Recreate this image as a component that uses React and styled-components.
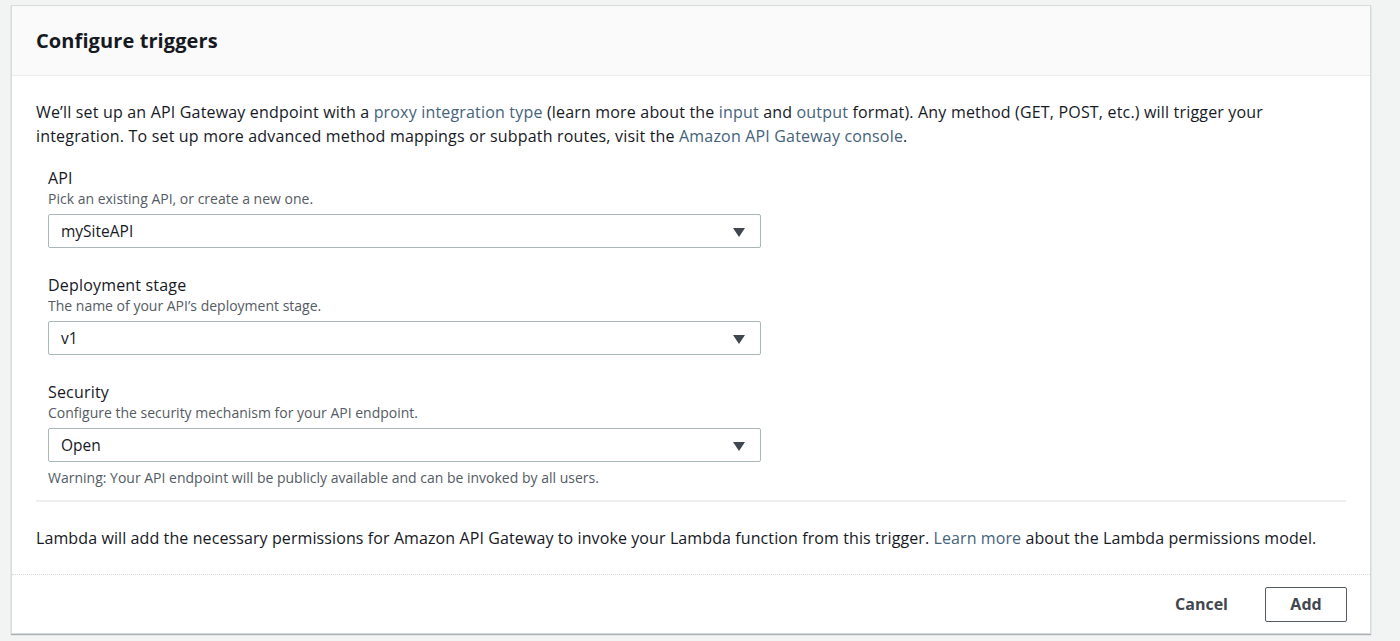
import React from 'react'
import styled, { createGlobalStyle } from 'styled-components'

const GlobalStyle = createGlobalStyle`
  body {
    margin: 0;
    background: #f2f3f3;
    font-family: "Open Sans", "Liberation Sans", Arial, sans-serif;
    color: #16191f;
  }
`

const Page = styled.div`
  padding: 5px 29px 8px 11px;
`

const Card = styled.section`
  background: #fff;
  border: 1px solid #d5dbdb;
  box-shadow: 0 1px 1px rgba(0, 28, 36, 0.3);
`

const Header = styled.header`
  height: 69px;
  display: flex;
  align-items: center;
  padding: 0 24px;
  background: #fafafa;
  border-bottom: 1px solid #eaeded;
`

const Title = styled.h2`
  margin: 0;
  font-size: 20px;
  font-weight: 700;
  letter-spacing: 0.1px;
  color: #16191f;
`

const Body = styled.div`
  padding: 24px 24px 0;
`

const Text = styled.p`
  margin: 0;
  font-size: 16px;
  line-height: 24px;
  letter-spacing: 0.18px;
  color: #16191f;
`

const Link = styled.a`
  color: #44637b;
  text-decoration: none;
`

const Form = styled.div`
  padding: 20px 12px 0;
  display: flex;
  flex-direction: column;
  gap: 27px;
`

const Field = styled.div`
  display: flex;
  flex-direction: column;
`

const Label = styled.label`
  font-size: 16px;
  line-height: 20px;
  letter-spacing: 0.18px;
`

const Desc = styled.span`
  font-size: 14px;
  line-height: 22px;
  color: #545b64;
  margin-bottom: 4px;
`

const SelectBox = styled.div`
  width: 713px;
  height: 34px;
  box-sizing: border-box;
  border: 1px solid #aab7b8;
  border-radius: 2px;
  display: flex;
  align-items: center;
  justify-content: space-between;
  padding: 0 15px 0 12px;
  font-size: 15.5px;
  color: #16191f;
`

const Caret = styled.span`
  width: 0;
  height: 0;
  border-left: 6px solid transparent;
  border-right: 6px solid transparent;
  border-top: 9px solid #414750;
  margin-top: 2px;
`

const Warning = styled.span`
  font-size: 14px;
  line-height: 16px;
  color: #545b64;
  margin-top: 8px;
`

const Divider = styled.hr`
  margin: 14px 0 0;
  border: 0;
  border-top: 2px solid #eef0f0;
`

const Permissions = styled(Text)`
  padding: 24px 0 24px;
  letter-spacing: 0.1px;
`

const Footer = styled.footer`
  border-top: 1px dotted #d5dbdb;
  height: 58px;
  display: flex;
  align-items: center;
  justify-content: flex-end;
  gap: 37px;
  padding: 0 23px;
`

const Button = styled.button`
  font-family: inherit;
  font-size: 16px;
  font-weight: 700;
  color: #414750;
  background: ${p => (p.outline ? '#fff' : 'transparent')};
  border: ${p => (p.outline ? '1px solid #545b64' : '0')};
  border-radius: 2px;
  height: 35px;
  padding: ${p => (p.outline ? '0 22px' : '0')};
  min-width: ${p => (p.outline ? '82px' : '0')};
  cursor: pointer;
`

const fields = [
  { label: 'API', desc: 'Pick an existing API, or create a new one.', value: 'mySiteAPI' },
  { label: 'Deployment stage', desc: 'The name of your API’s deployment stage.', value: 'v1' },
  { label: 'Security', desc: 'Configure the security mechanism for your API endpoint.', value: 'Open' },
]

const App = () => {
  return (
    <Page>
      <GlobalStyle />
      <Card>
        <Header>
          <Title>Configure triggers</Title>
        </Header>
        <Body>
          <Text>
            We’ll set up an API Gateway endpoint with a <Link href="#">proxy integration type</Link> (learn more
            about the <Link href="#">input</Link> and <Link href="#">output</Link> format). Any method (GET, POST,
            etc.) will trigger your integration. To set up more advanced method mappings or subpath routes, visit
            the <Link href="#">Amazon API Gateway console</Link>.
          </Text>
          <Form>
            {fields.map((f, i) => (
              <Field key={f.label}>
                <Label>{f.label}</Label>
                <Desc>{f.desc}</Desc>
                <SelectBox>
                  {f.value}
                  <Caret />
                </SelectBox>
                {i === fields.length - 1 ? (
                  <Warning>Warning: Your API endpoint will be publicly available and can be invoked by all users.</Warning>
                ) : null}
              </Field>
            ))}
          </Form>
          <Divider />
          <Permissions>
            Lambda will add the necessary permissions for Amazon API Gateway to invoke your Lambda function from
            this trigger. <Link href="#">Learn more</Link> about the Lambda permissions model.
          </Permissions>
        </Body>
        <Footer>
          <Button>Cancel</Button>
          <Button outline>Add</Button>
        </Footer>
      </Card>
    </Page>
  )
}

export default App
